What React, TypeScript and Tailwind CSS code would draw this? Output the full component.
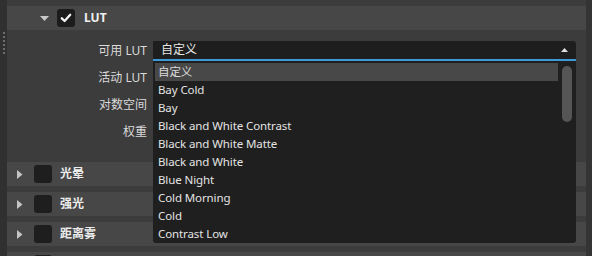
import React from "react";

const FONT = { fontFamily: '"Noto Sans", "Noto Sans CJK SC", sans-serif' };

const items = [
  "自定义",
  "Bay Cold",
  "Bay",
  "Black and White Contrast",
  "Black and White Matte",
  "Black and White",
  "Blue Night",
  "Cold Morning",
  "Cold",
  "Contrast Low",
];

function Check() {
  return (
    <svg width="12" height="12" viewBox="0 0 12 12">
      <path d="M1.8 6.3 L4.6 9 L10.2 2.8" fill="none" stroke="#f2f2f2" strokeWidth="2.3" strokeLinecap="round" strokeLinejoin="round" />
    </svg>
  );
}

function TriRight() {
  return (
    <svg width="6" height="9" viewBox="0 0 6 9">
      <path d="M0 0 L5.5 4.5 L0 9 Z" fill="#c4c4c4" />
    </svg>
  );
}

function TriDown() {
  return (
    <svg width="9" height="5" viewBox="0 0 9 5">
      <path d="M0 0 L9 0 L4.5 5 Z" fill="#c8c8c8" />
    </svg>
  );
}

function CollapsedRow({ label }: { label: string }) {
  return (
    <div className="h-[24px] bg-[#474747] flex items-center shrink-0">
      <div className="w-[10px]" />
      <TriRight />
      <div className="w-[11px]" />
      <div className="w-[18px] h-[18px] rounded-[3px] bg-[#1e1e1e]" />
      <span className="ml-[8px] text-[12px] font-bold text-[#ececec] leading-none">{label}</span>
    </div>
  );
}

function PropRow({ label, children }: { label: string; children?: React.ReactNode }) {
  return (
    <div className="h-[27px] flex items-center shrink-0">
      <div className="w-[140px] text-right text-[12px] text-[#dadada] leading-none">{label}</div>
      <div className="ml-[6px] flex-1 mr-[10px] relative">{children}</div>
    </div>
  );
}

export default function App() {
  return (
    <div className="w-[592px] h-[256px] flex bg-[#3c3c3c] overflow-hidden" style={FONT}>
      <div className="w-[7px] bg-[#303030] flex flex-col items-center pt-[32px] gap-[2px] shrink-0">
        {Array.from({ length: 6 }).map((_, i) => (
          <div key={i} className="w-[2px] h-[2px] bg-[#6e6e6e] ml-[1px]" />
        ))}
      </div>
      <div className="flex-1 flex flex-col pt-[6px] bg-[#3c3c3c]">
        <div className="h-[24px] bg-[#474747] flex items-center shrink-0">
          <div className="w-[33px]" />
          <TriDown />
          <div className="w-[8px]" />
          <div className="w-[18px] h-[18px] rounded-[3px] bg-[#1c1c1c] flex items-center justify-center">
            <Check />
          </div>
          <span className="ml-[9px] text-[12px] font-bold text-[#f0f0f0] leading-none">LUT</span>
        </div>
        <div className="h-[132px] pt-[7px] flex flex-col shrink-0">
          <PropRow label="可用 LUT">
            <div className="h-[20px] bg-[#1e1e1e] rounded-tr-[3px] border-b-2 border-[#3d9ad6] flex items-center pl-[8px] pr-[8px]">
              <span className="text-[12px] text-[#e6e6e6] leading-none flex-1">自定义</span>
              <svg width="7" height="4" viewBox="0 0 7 4">
                <path d="M0 4 L3.5 0 L7 4 Z" fill="#e0e0e0" />
              </svg>
            </div>
            <div className="absolute left-0 right-0 top-[20px] h-[182px] bg-[#1f1f1f] rounded-b-[3px] z-10 pt-[2px] pl-[2px] flex">
              <div className="flex-1 flex flex-col">
                {items.map((it, i) => (
                  <div
                    key={it}
                    className={
                      "h-[18px] flex items-center pl-[3px] pt-[1px] text-[11.5px] tracking-[-0.1px] leading-none " +
                      (i === 0 ? "bg-[#484848] text-[#dcdcdc]" : "text-[#e4e4e4]")
                    }
                  >
                    {it}
                  </div>
                ))}
              </div>
              <div className="w-[18px] flex justify-center pt-[3px]">
                <div className="w-[10px] h-[56px] rounded-[5px] bg-[#555555]" />
              </div>
            </div>
          </PropRow>
          <PropRow label="活动 LUT" />
          <PropRow label="对数空间" />
          <PropRow label="权重" />
        </div>
        <div className="flex flex-col gap-[6px]">
          <CollapsedRow label="光晕" />
          <CollapsedRow label="强光" />
          <CollapsedRow label="距离雾" />
          <CollapsedRow label="" />
        </div>
      </div>
      <div className="w-[6px] bg-[#343434] shrink-0" />
    </div>
  );
}
